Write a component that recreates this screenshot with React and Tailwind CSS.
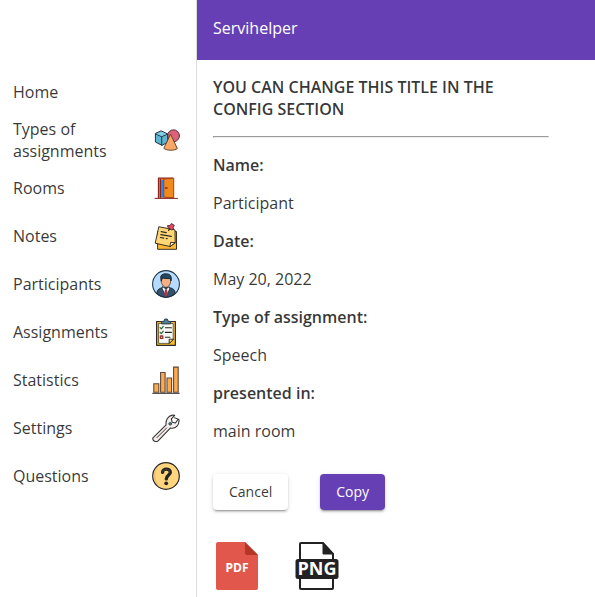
import React from "react";

function Icon({ children }) {
  return (
    <svg viewBox="0 0 28 28" className="size-7 shrink-0" fill="none" strokeLinejoin="round" strokeLinecap="round" aria-hidden="true">
      {children}
    </svg>
  );
}

const ShapesIcon = () => (
  <Icon>
    <circle cx="21.5" cy="9.8" r="6" fill="#dd6278" stroke="#5b3440" />
    <path d="M9.5 5l6.2 3v8.2L10 19.4 3.4 16V7.8z" fill="#5fb4d2" stroke="#20353f" />
    <path d="M3.6 7.9l6 2.8 6-2.7M9.7 10.8v8.3" stroke="#20353f" />
    <path d="M9.5 5.7l5 2.4-4.9 2-4.8-2.2z" fill="#82cfe6" />
    <path d="M18.7 8.4l6.6 14.2c-2.7 2.2-10.4 2.2-13.2 0z" fill="#f9a765" stroke="#6b422c" />
  </Icon>
);

const DoorIcon = () => (
  <Icon>
    <path d="M3 24.4h22.5" stroke="#8d241c" />
    <path d="M6.5 24V4.2h14V24" fill="#f47c20" stroke="#8d241c" strokeWidth="1.3" />
    <path d="M8.8 6h3v17.5h-3z" fill="#1f8bf5" />
    <path d="M8.5 5.5v18" stroke="#8d241c" strokeWidth="1" />
    <path d="M12.2 5l9.5-.8v19.6l-9.5-.6z" fill="#f08a1d" stroke="#a6431c" />
    <path d="M13.5 14h1.6" stroke="#8d241c" strokeWidth="1.4" />
  </Icon>
);

const NoteIcon = () => (
  <Icon>
    <path d="M6 9.5h18.5v17.8H6z" fill="#fbb936" stroke="#3d3020" />
    <path d="M7.2 4.8L23 7.9l.2 12.8-5.3 3.8L3.6 21.3z" fill="#ffd777" stroke="#3d3020" />
    <path d="M23 20.7l-4.4-.4-.7 4.1z" fill="#ffefae" stroke="#3d3020" />
    <path d="M9.2 9.7l5 .9M8.8 12.6l10.5 1.8M8.4 15.5l3.3.6m2.5.4l1 .2" stroke="#302a23" strokeWidth="1.2" />
    <path d="M16.6 8.4l1.6-2" stroke="#302a23" strokeWidth="1.3" />
    <path d="M16 3.6l2 .1 1.4-2.2 2.9 1.9-1.2 2.2.4 1.9-2.2.2-3.2-2.2z" fill="#e34c60" stroke="#602331" />
  </Icon>
);

const PersonIcon = () => (
  <Icon>
    <circle cx="14" cy="14" r="13.4" fill="#b5dcff" stroke="#223646" strokeWidth="1.1" />
    <path d="M4.9 23.6c.2-4.2 2.2-5.1 6-6.1h6.2c4 1 5.8 2 6 6.1-5.2 4.6-13.4 4.6-18.2 0z" fill="#32536d" stroke="#182936" />
    <path d="M10.8 16.7l3.2 2.2 3.2-2.2.6 2.2-3.8 7.8-3.8-7.8z" fill="#f3f5f7" stroke="#182936" strokeWidth=".8" />
    <path d="M13 19.3h2l.8 5.2-1.8 2.8-1.8-2.8z" fill="#a83847" />
    <path d="M9.5 8.4h9v4.5c-1.1 3-2.8 4.4-4.5 4.4s-3.4-1.4-4.5-4.4z" fill="#f5b086" stroke="#573a32" strokeWidth=".8" />
    <path d="M9.2 10.8L8.7 6.5c1-2.5 3.8-2.8 6.1-2.6 3.7.2 5 2.3 4.3 6.9l-1.4-2.5c-2.5.5-4.9.4-6.8-.8z" fill="#26465c" stroke="#182936" />
  </Icon>
);

const ClipboardIcon = () => (
  <Icon>
    <path d="M4.6 3.5h18.8v23.8H4.6z" fill="#f7bc22" stroke="#302d29" strokeWidth="1.2" />
    <path d="M7 5.5h14.2v15.7l-4.2 4.2H7z" fill="#f8f8f4" stroke="#4d4a3f" strokeWidth=".8" />
    <path d="M17.2 25.2v-4h4z" fill="#f3d768" stroke="#302d29" />
    <path d="M9.5 5.5V3.6l2.7-.5.5-2h2.7l.6 2 2.6.5v1.9z" fill="#537e98" stroke="#294153" />
    <path d="M8.1 9.6l1.2 1.3 2-2.5M8.1 14.4l1.2 1.3 2-2.5" stroke="#28663a" strokeWidth="1.2" />
    <path d="M8.4 18h2.4v2.4H8.4z" stroke="#982f31" strokeWidth="1.3" />
    <path d="M13.4 9.7h6M13.4 14.4h6M13.4 19.2h4.5" stroke="#242424" strokeWidth="1.1" />
  </Icon>
);

const ChartIcon = () => (
  <Icon>
    <path d="M.7 27.3h26.6" stroke="#2a2a2a" />
    <g fill="#ffaa4d" stroke="#5a4a40" strokeWidth="1.1" strokeLinejoin="miter">
      <path d="M1.8 17.7h5v8.5h-5zM8.6 6.5h4.5v19.7H8.6zM15 12h4.6v14.2H15zM21.6 1.1h4.6v25.1h-4.6z" />
    </g>
  </Icon>
);

const WrenchIcon = () => (
  <Icon>
    <path d="M1.2 23.6L14.1 10.8c-.6-4.7 1.8-8.8 6.3-9.7l2.3.2-3.3 3.6.8 3.4 3.2.7 2.7-3.8.9.6c.5 5.6-3.4 9.4-8.7 8.3L6.1 26.8c-2.4 2.2-6.5-.6-4.9-3.2z" fill="#f4edeb" stroke="#333" strokeWidth="1.1" />
    <path d="M22.6 3.8l3.2 1.2M14.6 14L5 23.6" stroke="#333" />
    <circle cx="18.2" cy="9.8" r="1.3" fill="#5796b0" stroke="#29424e" />
  </Icon>
);

const QuestionIcon = () => (
  <Icon>
    <circle cx="14" cy="14" r="13.3" fill="#ffd57e" stroke="#252525" strokeWidth="1.2" />
    <path d="M6 4.5a12.4 12.4 0 0 0 2.3 20.4A16 16 0 0 1 6 4.5z" fill="#f2bd70" />
    <path d="M10.6 10.3c-.3-4 7.7-4.4 7.7 0 0 3-4 3-4 6.6" stroke="#242424" strokeWidth="3.4" />
    <circle cx="14.2" cy="21.3" r="1.9" fill="#242424" />
    <path d="M10.6 10.1c.3-3.3 6.7-3.3 7 0" stroke="#514b45" strokeWidth=".7" />
  </Icon>
);

const links = [
  { label: "Home" },
  { label: "Types of assignments", icon: ShapesIcon },
  { label: "Rooms", icon: DoorIcon },
  { label: "Notes", icon: NoteIcon },
  { label: "Participants", icon: PersonIcon },
  { label: "Assignments", icon: ClipboardIcon },
  { label: "Statistics", icon: ChartIcon },
  { label: "Settings", icon: WrenchIcon },
  { label: "Questions", icon: QuestionIcon },
];

const details = [
  ["Name:", "Participant"],
  ["Date:", "May 20, 2022"],
  ["Type of assignment:", "Speech"],
  ["presented in:", "main room"],
];

function PdfIcon() {
  return (
    <svg viewBox="0 0 48 48" className="size-12" aria-hidden="true">
      <path d="M5 0h27l13 13v33a2 2 0 0 1-2 2H5a2 2 0 0 1-2-2V2a2 2 0 0 1 2-2z" fill="#e2574c" />
      <path d="M32 0l13 13H34a2 2 0 0 1-2-2z" fill="#b53629" />
      <text x="24" y="30" textAnchor="middle" fill="#fff" fontSize="12" className="font-['Open_Sans',sans-serif] font-bold">PDF</text>
    </svg>
  );
}

function PngIcon() {
  return (
    <svg viewBox="0 0 48 48" className="size-12" aria-hidden="true">
      <path d="M8 1h22l10 11v34a1 1 0 0 1-1 1H8a1 1 0 0 1-1-1V2a1 1 0 0 1 1-1z" fill="#fff" stroke="#222" strokeWidth="2" />
      <path d="M30 1l10 11H30z" fill="#222" stroke="#222" />
      <rect x="2.5" y="17" width="43" height="20" rx="2.5" fill="#222" />
      <text x="24" y="33" textAnchor="middle" fill="#fff" fontSize="18" className="font-['Open_Sans',sans-serif] font-bold">PNG</text>
    </svg>
  );
}

export default function App() {
  return (
    <div className="flex h-screen overflow-hidden bg-white font-['Open_Sans',sans-serif] text-base leading-[22px] text-black/80">
      <aside className="w-[197px] shrink-0 border-r border-[#dcdcdc] pt-[68px]">
        <nav>
          {links.map(({ label, icon: Glyph }) => (
            <a key={label} href="#" className="flex h-12 items-center justify-between pr-4 pl-[13px]">
              <span className="max-w-28">{label}</span>
              {Glyph && <Glyph />}
            </a>
          ))}
        </nav>
      </aside>

      <div className="min-w-0 flex-1">
        <header className="flex h-[60px] items-center bg-[#673fb4] px-4 pb-1 text-white">
          <span>Servihelper</span>
        </header>
        <main className="py-4 pr-[46px] pl-4">
          <h1 className="font-semibold">YOU CAN CHANGE THIS TITLE IN THE CONFIG SECTION</h1>
          <hr className="my-4 border border-t-[#9a9a9a] border-r-[#eee] border-b-[#eee] border-l-[#9a9a9a]" />
          <dl className="flex flex-col gap-4">
            {details.map(([term, value]) => (
              <div key={term} className="flex flex-col gap-4">
                <dt className="font-semibold">{term}</dt>
                <dd>{value}</dd>
              </div>
            ))}
          </dl>
          <div className="mt-8 flex gap-8 text-sm">
            <button type="button" className="h-9 rounded bg-white px-4 shadow-[0_3px_1px_-2px_rgba(0,0,0,0.2),0_2px_2px_rgba(0,0,0,0.14),0_1px_5px_rgba(0,0,0,0.12)]">
              Cancel
            </button>
            <button type="button" className="h-9 rounded bg-[#673fb4] px-4 font-medium text-white shadow-[0_3px_1px_-2px_rgba(0,0,0,0.2),0_2px_2px_rgba(0,0,0,0.14),0_1px_5px_rgba(0,0,0,0.12)]">
              Copy
            </button>
          </div>
          <div className="mt-8 flex gap-8">
            <button type="button" aria-label="PDF"><PdfIcon /></button>
            <button type="button" aria-label="PNG"><PngIcon /></button>
          </div>
        </main>
      </div>
    </div>
  );
}
